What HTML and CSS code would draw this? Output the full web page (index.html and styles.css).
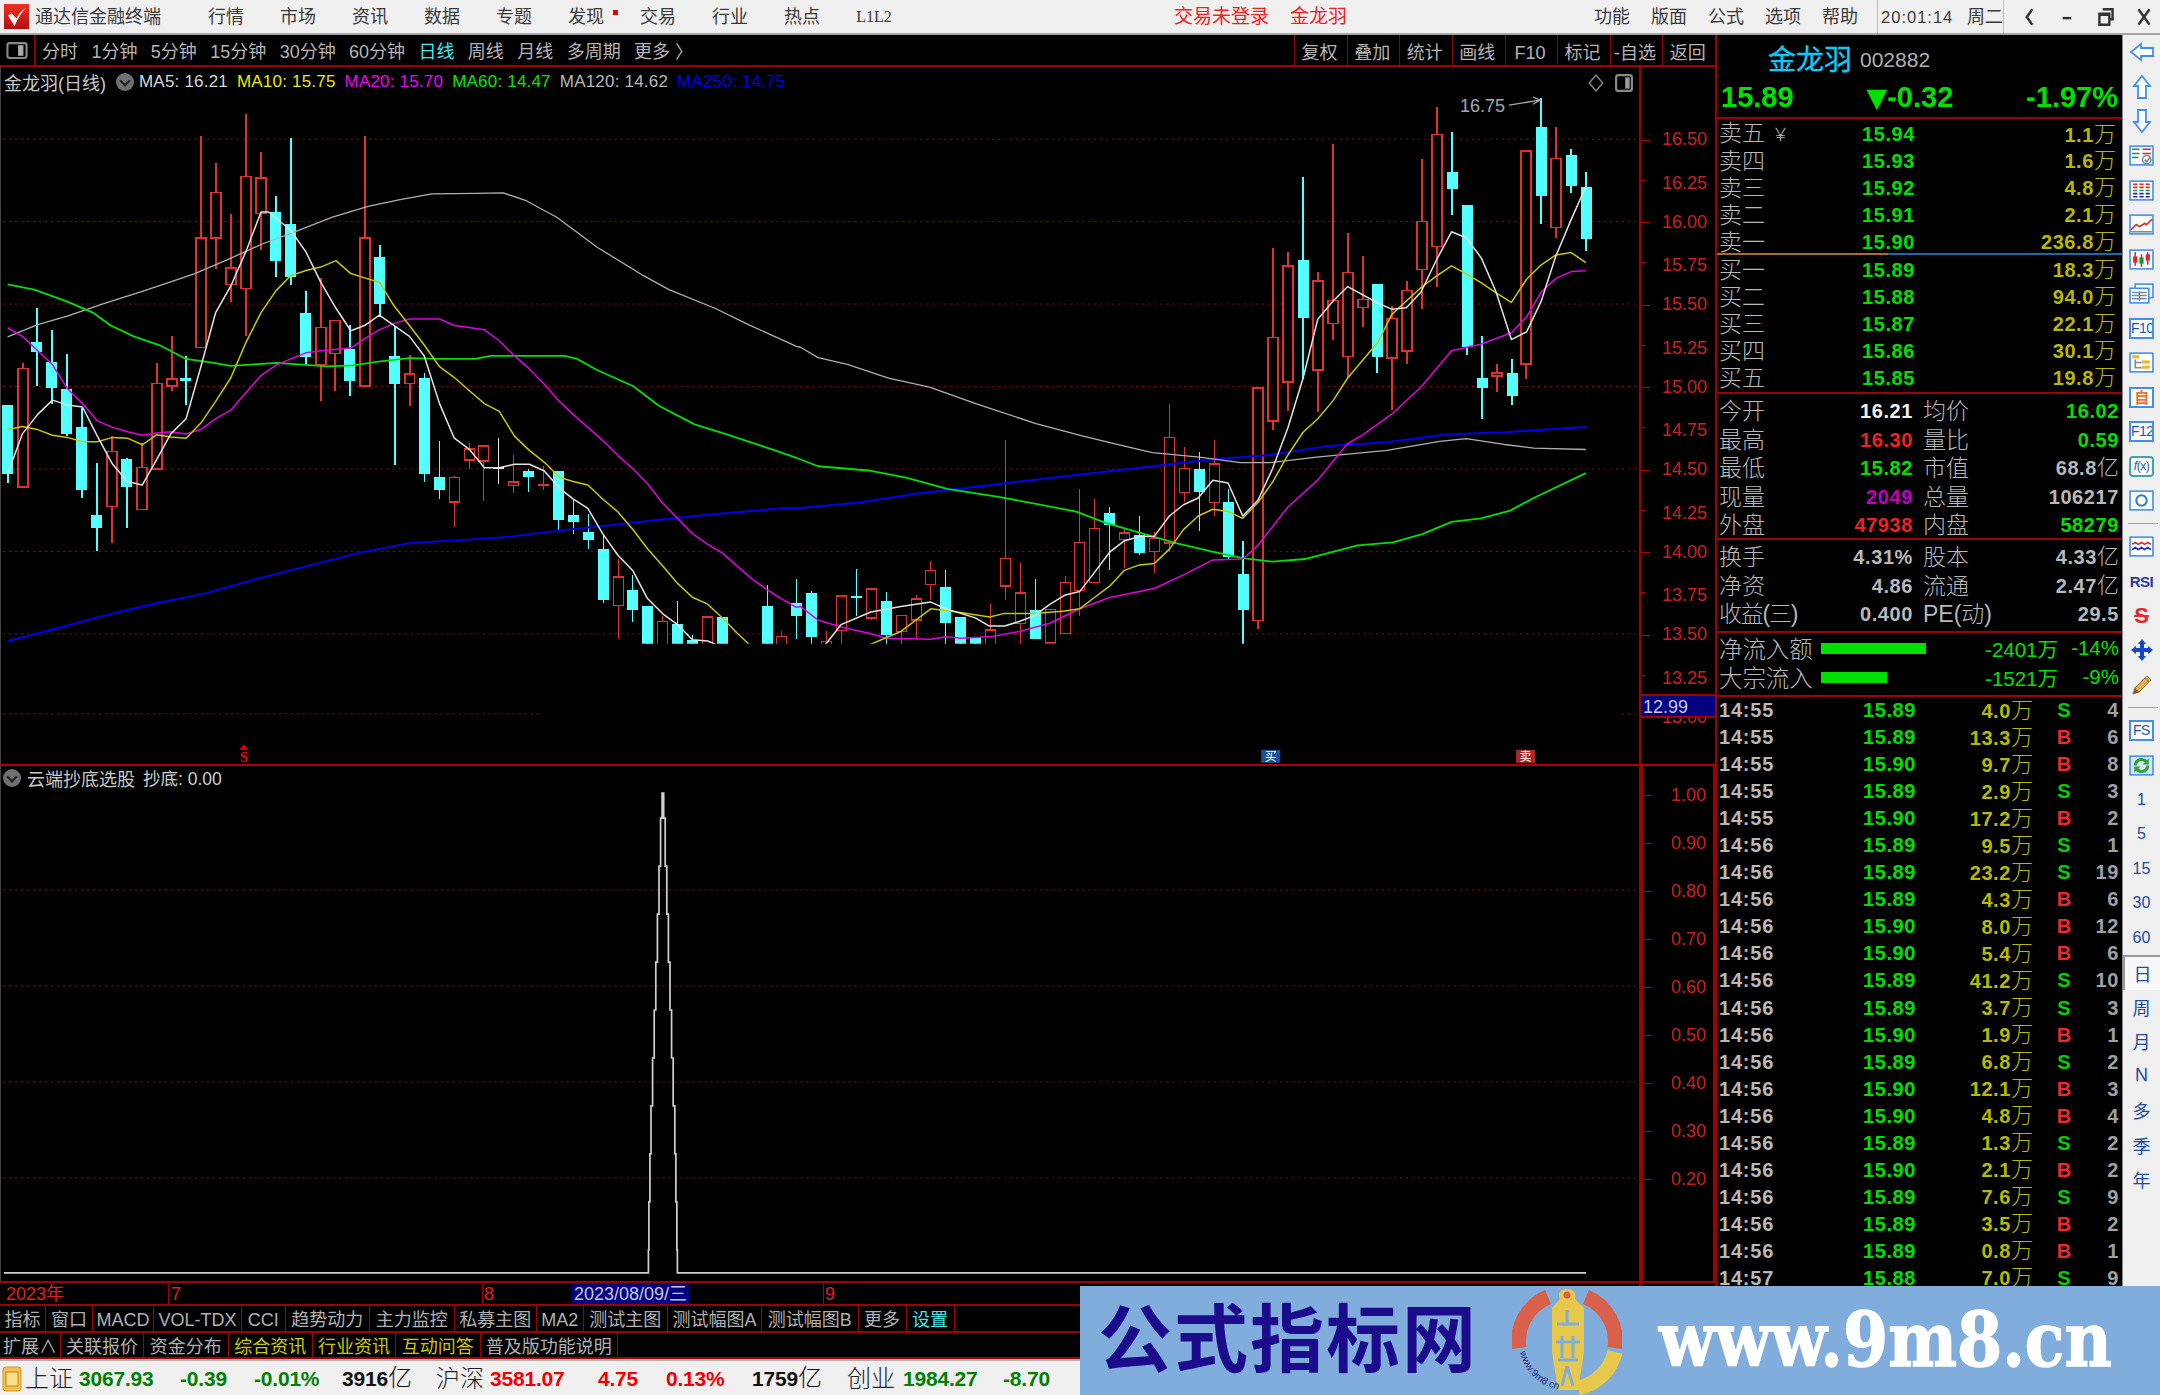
FILE: index.html
```html
<!DOCTYPE html>
<html lang="zh-CN">
<head>
<meta charset="utf-8">
<title>通达信金融终端</title>
<link rel="stylesheet" href="styles.css">
</head>
<body>
<div class="app">
  <header class="topbar">
    <svg class="app-logo" viewBox="0 0 26 26"><defs><linearGradient id="lg" x1="0" y1="0" x2="0" y2="1"><stop offset="0" stop-color="#f03020"/><stop offset="1" stop-color="#b01010"/></linearGradient></defs><rect width="26" height="26" fill="url(#lg)"/><path d="M23 4 C18 7 15 11 13 15 L8 10 L4 12 L11 23 C14 16 18 9 23 4 Z" fill="#f4f0f0"/></svg>
    <span class="app-title">通达信金融终端</span>
    <nav class="menu">
      <span>行情</span><span>市场</span><span>资讯</span><span>数据</span><span>专题</span><span class="has-dot">发现</span><span>交易</span><span>行业</span><span>热点</span><span class="menu-serif">L1L2</span>
    </nav>
    <span class="login">交易未登录</span>
    <span class="login login-name">金龙羽</span>
    <nav class="menu menu-right"><span>功能</span><span>版面</span><span>公式</span><span>选项</span><span>帮助</span></nav>
    <div class="clock"><span class="clock-time">20:01:14</span><span>周二</span></div>
    <div class="winbtns">
      <svg viewBox="0 0 16 20"><path d="M11 3 L6 10 L11 17" class="win-stroke"/></svg>
      <svg viewBox="0 0 16 20"><path d="M4 11 H12" class="win-stroke"/></svg>
      <svg viewBox="0 0 16 20"><path d="M5 3 H14 V12 H11 M2 7 H11 V17 H2 Z M2 8 H11" class="win-stroke"/></svg>
      <svg viewBox="0 0 16 20"><path d="M3 3 L13 17 M13 3 L3 17" class="win-stroke"/></svg>
    </div>
  </header>

  <div class="main">
    <section class="chart-col">
      <div class="toolbar">
        <div class="tool-icon"><svg viewBox="0 0 20 16"><rect x="1" y="1" width="18" height="14" rx="2" class="pane-ico"/><rect x="11" y="3" width="5" height="10" class="pane-fill"/></svg></div>
        <div class="periods">
          <span>分时</span><span>1分钟</span><span>5分钟</span><span>15分钟</span><span>30分钟</span><span>60分钟</span><span class="on">日线</span><span>周线</span><span>月线</span><span>多周期</span><span>更多 〉</span>
        </div>
        <div class="tool-btns">
          <span>复权</span><span>叠加</span><span>统计</span><span>画线</span><span>F10</span><span>标记</span><span>-自选</span><span>返回</span>
        </div>
      </div>

      <div class="upper">
        <svg class="plot" id="plot-upper" viewBox="0 67 1639 697">
          <defs><clipPath id="clip-up"><rect x="0" y="67" width="1639" height="577"/></clipPath></defs>
          <path class="grid" d="M2 139H1639M2 221.5H1639M2 304H1639M2 386.5H1639M2 469H1639M2 551.5H1639M2 634H1639M2 714H538M1622 714H1639"/>
          <g clip-path="url(#clip-up)" id="up-series"></g>
          <text x="1460" y="112" class="peak">16.75</text>
          <path class="peak-arrow" d="M1509 105 L1540 100 M1533 97 L1540 100 L1533 104"/>
          <path class="mk-s" d="M243 745 L247.500 750 H238.500 Z"/>
          <text x="243" y="762" class="mk-s-text">S</text>
          <rect x="1261" y="750" width="19" height="13" class="mk-buy"/><text x="1270.500" y="761" class="mk-label">买</text>
          <rect x="1516" y="750" width="19" height="13" class="mk-sell"/><text x="1525.500" y="761" class="mk-label">卖</text>
        </svg>
        <div class="axis axis-up">
          <span>16.50</span><span class="minor">16.25</span><span>16.00</span><span class="minor">15.75</span><span>15.50</span><span class="minor">15.25</span><span>15.00</span><span class="minor">14.75</span><span>14.50</span><span class="minor">14.25</span><span>14.00</span><span class="minor">13.75</span><span>13.50</span><span class="minor">13.25</span><span>13.00</span>
          <div class="axis-cursor">12.99</div>
        </div>
        <div class="legend">
          <span class="legend-name">金龙羽(日线)</span>
          <i class="chev"></i>
          <span class="c-ma5">MA5: 16.21</span><span class="c-ma10">MA10: 15.75</span><span class="c-ma20">MA20: 15.70</span><span class="c-ma60">MA60: 14.47</span><span class="c-ma120">MA120: 14.62</span><span class="c-ma250">MA250: 14.75</span>
        </div>
        <div class="plot-tools">
          <svg viewBox="0 0 14 16" class="pt-diamond"><path d="M7 1 L13 8 L7 15 L1 8 Z"/></svg>
          <svg viewBox="0 0 16 16" class="pt-pane"><rect x="1" y="1" width="14" height="14" rx="2"/><path d="M9 3 H13 V13 H9 Z"/></svg>
        </div>
      </div>

      <div class="lower">
        <svg class="plot" id="plot-lower" viewBox="0 766 1639 515">
          <path class="grid" d="M2 890H1639M2 986H1639M2 1082H1639M2 1178H1639"/>
          <path id="spike" class="spike" d=""/>
        </svg>
        <div class="axis axis-low">
          <span>1.00</span><span>0.90</span><span>0.80</span><span>0.70</span><span>0.60</span><span>0.50</span><span>0.40</span><span>0.30</span><span>0.20</span>
        </div>
        <div class="legend legend-low">
          <i class="chev"></i>
          <span class="legend-name">云端抄底选股</span><span class="legend-val">抄底: 0.00</span>
        </div>
      </div>

      <div class="timeaxis">
        <div class="time-track">
          <span class="t-label t-y">2023年</span>
          <i class="t-tick t-l7"></i><span class="t-label t-7">7</span>
          <i class="t-tick t-l8"></i><span class="t-label t-8">8</span>
          <span class="t-cursor">2023/08/09/三</span>
          <i class="t-tick t-l9"></i><span class="t-label t-9">9</span>
        </div>
      </div>
      <div class="tabs tabs-a">
        <span>指标</span><span>窗口</span><span>MACD</span><span>VOL-TDX</span><span>CCI</span><span>趋势动力</span><span>主力监控</span><span>私募主图</span><span>MA2</span><span>测试主图</span><span>测试幅图A</span><span>测试幅图B</span><span>更多</span><span class="cyan">设置</span>
      </div>
      <div class="tabs tabs-b">
        <span>扩展∧</span><span>关联报价</span><span>资金分布</span><span class="yel">综合资讯</span><span class="yel">行业资讯</span><span class="yel">互动问答</span><span>普及版功能说明</span>
      </div>
    </section>

    <aside class="quote">
      <div class="q-title"><span class="q-name">金龙羽</span><span class="q-code">002882</span></div>
      <div class="q-price"><span>15.89</span><span><i class="tri">▼</i>-0.32</span><span>-1.97%</span></div>

      <div class="book">
        <div class="b-row"><span class="lbl">卖五 <em>￥</em></span><b>15.94</b><span class="vol"><b>1.1</b>万</span></div>
        <div class="b-row"><span class="lbl">卖四</span><b>15.93</b><span class="vol"><b>1.6</b>万</span></div>
        <div class="b-row"><span class="lbl">卖三</span><b>15.92</b><span class="vol"><b>4.8</b>万</span></div>
        <div class="b-row"><span class="lbl">卖二</span><b>15.91</b><span class="vol"><b>2.1</b>万</span></div>
        <div class="b-row"><span class="lbl">卖一</span><b>15.90</b><span class="vol"><b>236.8</b>万</span></div>
      </div>
      <div class="book-split"></div>
      <div class="book book-buy">
        <div class="b-row"><span class="lbl">买一</span><b>15.89</b><span class="vol"><b>18.3</b>万</span></div>
        <div class="b-row"><span class="lbl">买二</span><b>15.88</b><span class="vol"><b>94.0</b>万</span></div>
        <div class="b-row"><span class="lbl">买三</span><b>15.87</b><span class="vol"><b>22.1</b>万</span></div>
        <div class="b-row"><span class="lbl">买四</span><b>15.86</b><span class="vol"><b>30.1</b>万</span></div>
        <div class="b-row"><span class="lbl">买五</span><b>15.85</b><span class="vol"><b>19.8</b>万</span></div>
      </div>

      <div class="stats">
        <div class="s-row"><span class="lbl">今开</span><b class="white">16.21</b><span class="lbl">均价</span><b class="green">16.02</b></div>
        <div class="s-row"><span class="lbl">最高</span><b class="red">16.30</b><span class="lbl">量比</span><b class="green">0.59</b></div>
        <div class="s-row"><span class="lbl">最低</span><b class="green">15.82</b><span class="lbl">市值</span><b class="gray">68.8<i>亿</i></b></div>
        <div class="s-row"><span class="lbl">现量</span><b class="mag">2049</b><span class="lbl">总量</span><b class="gray">106217</b></div>
        <div class="s-row"><span class="lbl">外盘</span><b class="red">47938</b><span class="lbl">内盘</span><b class="green">58279</b></div>
      </div>
      <div class="stats stats-b">
        <div class="s-row"><span class="lbl">换手</span><b class="gray">4.31%</b><span class="lbl">股本</span><b class="gray">4.33<i>亿</i></b></div>
        <div class="s-row"><span class="lbl">净资</span><b class="gray">4.86</b><span class="lbl">流通</span><b class="gray">2.47<i>亿</i></b></div>
        <div class="s-row"><span class="lbl lbl-tight">收益(三)</span><b class="gray">0.400</b><span class="lbl">PE(动)</span><b class="gray">29.5</b></div>
      </div>

      <div class="flows">
        <div class="f-row"><span class="lbl">净流入额</span><div class="f-track"><div class="f-bar" style="width:105px"></div></div><span class="f-val">-2401万</span><span class="f-pct">-14%</span></div>
        <div class="f-row"><span class="lbl">大宗流入</span><div class="f-track"><div class="f-bar" style="width:66px"></div></div><span class="f-val">-1521万</span><span class="f-pct">-9%</span></div>
      </div>

      <div class="trades">
        <div class="t-row"><b>14:55</b><b>15.89</b><span class="vol"><b>4.0</b>万</span><b class="s">S</b><b class="n">4</b></div>
        <div class="t-row"><b>14:55</b><b>15.89</b><span class="vol"><b>13.3</b>万</span><b class="b">B</b><b class="n">6</b></div>
        <div class="t-row"><b>14:55</b><b>15.90</b><span class="vol"><b>9.7</b>万</span><b class="b">B</b><b class="n">8</b></div>
        <div class="t-row"><b>14:55</b><b>15.89</b><span class="vol"><b>2.9</b>万</span><b class="s">S</b><b class="n">3</b></div>
        <div class="t-row"><b>14:55</b><b>15.90</b><span class="vol"><b>17.2</b>万</span><b class="b">B</b><b class="n">2</b></div>
        <div class="t-row"><b>14:56</b><b>15.89</b><span class="vol"><b>9.5</b>万</span><b class="s">S</b><b class="n">1</b></div>
        <div class="t-row"><b>14:56</b><b>15.89</b><span class="vol"><b>23.2</b>万</span><b class="s">S</b><b class="n">19</b></div>
        <div class="t-row"><b>14:56</b><b>15.89</b><span class="vol"><b>4.3</b>万</span><b class="b">B</b><b class="n">6</b></div>
        <div class="t-row"><b>14:56</b><b>15.90</b><span class="vol"><b>8.0</b>万</span><b class="b">B</b><b class="n">12</b></div>
        <div class="t-row"><b>14:56</b><b>15.90</b><span class="vol"><b>5.4</b>万</span><b class="b">B</b><b class="n">6</b></div>
        <div class="t-row"><b>14:56</b><b>15.89</b><span class="vol"><b>41.2</b>万</span><b class="s">S</b><b class="n">10</b></div>
        <div class="t-row"><b>14:56</b><b>15.89</b><span class="vol"><b>3.7</b>万</span><b class="s">S</b><b class="n">3</b></div>
        <div class="t-row"><b>14:56</b><b>15.90</b><span class="vol"><b>1.9</b>万</span><b class="b">B</b><b class="n">1</b></div>
        <div class="t-row"><b>14:56</b><b>15.89</b><span class="vol"><b>6.8</b>万</span><b class="s">S</b><b class="n">2</b></div>
        <div class="t-row"><b>14:56</b><b>15.90</b><span class="vol"><b>12.1</b>万</span><b class="b">B</b><b class="n">3</b></div>
        <div class="t-row"><b>14:56</b><b>15.90</b><span class="vol"><b>4.8</b>万</span><b class="b">B</b><b class="n">4</b></div>
        <div class="t-row"><b>14:56</b><b>15.89</b><span class="vol"><b>1.3</b>万</span><b class="s">S</b><b class="n">2</b></div>
        <div class="t-row"><b>14:56</b><b>15.90</b><span class="vol"><b>2.1</b>万</span><b class="b">B</b><b class="n">2</b></div>
        <div class="t-row"><b>14:56</b><b>15.89</b><span class="vol"><b>7.6</b>万</span><b class="s">S</b><b class="n">9</b></div>
        <div class="t-row"><b>14:56</b><b>15.89</b><span class="vol"><b>3.5</b>万</span><b class="b">B</b><b class="n">2</b></div>
        <div class="t-row"><b>14:56</b><b>15.89</b><span class="vol"><b>0.8</b>万</span><b class="b">B</b><b class="n">1</b></div>
      </div>
      <div class="t-row t-row-cut"><b>14:57</b><b>15.88</b><span class="vol"><b>7.0</b>万</span><b class="s">S</b><b class="n">9</b></div>
    </aside>

    <aside class="side">
      <div class="side-item"><svg viewBox="0 0 26 22" class="arrow"><path d="M2 11 L12 3 V7 H24 V15 H12 V19 Z"/></svg></div>
      <div class="side-item"><svg viewBox="0 0 22 26" class="arrow"><path d="M11 2 L19 12 H15 V24 H7 V12 H3 Z"/></svg></div>
      <div class="side-item"><svg viewBox="0 0 22 26" class="arrow"><path d="M11 24 L19 14 H15 V2 H7 V14 H3 Z"/></svg></div>
      <div class="side-item"><svg viewBox="0 0 24 20" class="ico"><rect x="1" y="1" width="22" height="18" class="box"/><path d="M3 4H10M3 8H10M3 12H9" class="s-green"/><path d="M13 4H21M13 8H21" class="s-red"/><circle cx="17" cy="14" r="4" class="s-gray"/><path d="M15 14 L17 16 L20 12" class="s-gray"/></svg></div>
      <div class="side-item"><svg viewBox="0 0 24 20" class="ico"><rect x="1" y="1" width="22" height="18" class="box"/><path d="M4 4H8M10 4H14M16 4H20M4 7H8M16 7H20M10 7H14" class="s-red"/><path d="M4 10H8M10 10H14M16 10H20" class="s-green"/><path d="M4 13H8M10 13H14M16 13H20M4 16H8M10 16H14M16 16H20" class="s-blue"/></svg></div>
      <div class="side-item"><svg viewBox="0 0 24 20" class="ico"><rect x="1" y="1" width="22" height="18" class="box"/><path d="M2 15 L7 10 L10 12 L15 9 L17 10 L22 5" class="s-red"/><path d="M2 17H22" class="s-gray"/></svg></div>
      <div class="side-item"><svg viewBox="0 0 24 20" class="ico"><rect x="1" y="1" width="22" height="18" class="box"/><path d="M6 3V16M12 5V17M18 3V15" class="s-red"/><rect x="4" y="7" width="4" height="6" class="f-red"/><rect x="10" y="8" width="4" height="6" class="f-green"/><rect x="16" y="5" width="4" height="6" class="f-red"/></svg></div>
      <div class="side-item"><svg viewBox="0 0 24 20" class="ico"><rect x="6" y="1" width="17" height="13" class="box"/><rect x="1" y="5" width="18" height="14" class="box"/><path d="M3 9H17M3 12H17M3 15H17M10 8V17" class="s-gray"/></svg></div>
      <div class="side-item"><span class="boxed">F10</span></div>
      <div class="side-item"><svg viewBox="0 0 24 20" class="ico"><rect x="1" y="1" width="22" height="18" class="box"/><path d="M6 7V15H12M6 10H12" class="s-gray"/><rect x="3" y="3" width="7" height="3" class="f-yellow"/><rect x="12" y="8" width="8" height="3" class="f-yellow"/><rect x="12" y="13" width="8" height="3" class="f-yellow"/></svg></div>
      <div class="side-item"><span class="boxed boxed-orange">自</span></div>
      <div class="side-item"><span class="boxed">F12</span></div>
      <div class="side-item"><span class="boxed boxed-teal"><em>f</em>(x)</span></div>
      <div class="side-item"><svg viewBox="0 0 24 20" class="ico"><rect x="1" y="1" width="22" height="18" class="box"/><circle cx="12" cy="10" r="5" class="s-blue2"/></svg></div>
      <div class="side-sep"></div>
      <div class="side-item"><svg viewBox="0 0 24 20" class="ico"><rect x="1" y="1" width="22" height="18" class="box"/><path d="M3 8 L6 6 L9 8 L12 6 L15 8 L18 6 L21 8" class="s-red"/><path d="M3 13 L6 11 L9 13 L12 11 L15 13 L18 11 L21 13" class="s-blue"/></svg></div>
      <div class="side-item"><span class="rsi">RSI</span></div>
      <div class="side-item"><span class="dollar">S</span></div>
      <div class="side-item"><svg viewBox="0 0 24 24" class="ico ico-sq"><path d="M12 1 L16 6 H14 V10 H18 V8 L23 12 L18 16 V14 H14 V18 H16 L12 23 L8 18 H10 V14 H6 V16 L1 12 L6 8 V10 H10 V6 H8 Z" class="f-move"/></svg></div>
      <div class="side-item"><svg viewBox="0 0 24 24" class="ico ico-sq"><path d="M3 21 L5 15 L17 3 L21 7 L9 19 Z" class="f-pencil"/><path d="M3 21 L5 15 L9 19 Z" class="f-tip"/><path d="M15 5 L19 9" class="s-gray"/></svg></div>
      <div class="side-sep"></div>
      <div class="side-item"><span class="boxed">FS</span></div>
      <div class="side-item"><svg viewBox="0 0 24 20" class="ico"><rect x="1" y="1" width="22" height="18" class="box box-soft"/><path d="M6 10 A6 6 0 0 1 17 7 M18 10 A6 6 0 0 1 7 13" class="s-refresh"/><path d="M19 3 V9 H13 Z M5 17 V11 H11 Z" class="f-green2"/></svg></div>
      <div class="side-item side-txt">1</div>
      <div class="side-item side-txt">5</div>
      <div class="side-item side-txt">15</div>
      <div class="side-item side-txt">30</div>
      <div class="side-item side-txt">60</div>
      <div class="side-item side-txt side-on">日</div>
      <div class="side-item side-txt">周</div>
      <div class="side-item side-txt">月</div>
      <div class="side-item side-txt">N</div>
      <div class="side-item side-txt">多</div>
      <div class="side-item side-txt">季</div>
      <div class="side-item side-txt">年</div>
    </aside>
  </div>

  <footer class="status">
    <svg class="status-ico" viewBox="0 0 20 26"><rect x="1" y="1" width="18" height="24" rx="3" class="si-outer"/><rect x="4" y="6" width="12" height="14" class="si-inner"/></svg>
    <span class="st-name">上证</span><b class="st-g">3067.93</b><b class="st-g">-0.39</b><b class="st-g">-0.01%</b><b class="st-k">3916<i>亿</i></b>
    <span class="st-name">沪深</span><b class="st-r">3581.07</b><b class="st-r">4.75</b><b class="st-r">0.13%</b><b class="st-k">1759<i>亿</i></b>
    <span class="st-name">创业</span><b class="st-g">1984.27</b><b class="st-g">-8.70</b>
  </footer>

  <div class="watermark">
    <span class="wm-cn">公式指标网</span>
    <svg class="wm-logo" viewBox="0 0 110 110">
      <defs><path id="wm-arc" d="M8 66 A48 48 0 0 0 52 104"/></defs>
      <path d="M7 62 A48 48 0 0 1 36 11" class="wm-red"/><path d="M74 11 A48 48 0 0 1 103 62" class="wm-red"/>
      <path d="M103 66 A48 48 0 0 1 66 102" class="wm-yel"/>
      <path d="M55 3 C62 3 65 8 63 13 L72 22 L72 66 L66 104 H46 L40 66 L40 22 L48 13 C45 8 48 3 55 3 Z" class="wm-fig"/>
      <circle cx="55" cy="9" r="3.500" class="wm-eye"/>
      <path d="M45 38 H67 M55 24 V38 M44 56 H68 M50 50 V72 M61 50 V72 M46 74 H66 M55 80 L50 100 M55 80 L61 100" class="wm-ink"/>
      <text class="wm-small"><textPath href="#wm-arc">www.9m8.cn</textPath></text>
    </svg>
    <span class="wm-url">www.9m8.cn</span>
  </div>
</div>
<script src="chart.js"></script>
</body>
</html>
```
FILE: styles.css
```css
* { box-sizing: border-box; margin: 0; padding: 0; }
html, body { background: #000; }
body {
  width: 2160px; height: 1395px; overflow: hidden;
  font-family: "Liberation Sans", "Noto Sans CJK SC", sans-serif;
}
.app { width: 2160px; height: 1395px; position: relative; display: flex; flex-direction: column; overflow: hidden; }

/* top bar */
.topbar {
  height: 35px; flex: none; display: flex; align-items: center;
  background: #f0f0f0; border-bottom: 2px solid #a6a6a6; padding-top: 1px;
  color: #3a3a3a; font-size: 18px; line-height: 32px;
}
.app-logo { width: 25px; height: 25px; margin-left: 4px; margin-top: -2px; flex: none; }
.app-title { margin-left: 6px; width: 173px; }
.menu { display: flex; gap: 36px; }
.menu span { width: 36px; text-align: center; position: relative; white-space: nowrap; }
.has-dot::after { content: ""; position: absolute; left: 45px; top: 9px; width: 5px; height: 5px; background: #f00000; }
.menu-serif { font-family: "Liberation Serif", serif; font-size: 16px; }
.login { color: #f02020; font-size: 19px; margin-left: 282px; white-space: nowrap; }
.login-name { margin-left: 21px; }
.menu-right { gap: 21px; margin-left: 247px; }
.clock { margin-left: 19px; width: 127px; height: 32px; border-left: 1px solid #bdbdbd; border-right: 1px solid #bdbdbd; display: flex; align-items: center; white-space: nowrap; }
.clock-time { font-size: 16.500px; letter-spacing: 1px; width: 86px; margin-left: 3px; }
.winbtns { display: flex; flex: 1; align-items: center; justify-content: space-between; padding: 0 7px 0 16px; }
.winbtns svg { width: 18px; height: 22px; }
.win-stroke { fill: none; stroke: #333; stroke-width: 2.200; }

/* layout */
.main { flex: none; height: 1324px; display: flex; background: #000; }
.chart-col { width: 1715px; flex: none; display: flex; flex-direction: column; }

/* toolbar */
.toolbar { height: 32px; flex: none; display: flex; align-items: center; border-bottom: 2px solid #a00000; color: #b4b4b4; font-size: 18px; line-height: 30px; }
.tool-icon { width: 36px; height: 30px; border-right: 2px solid #8c0000; display: flex; align-items: center; justify-content: center; }
.tool-icon svg { width: 22px; height: 17px; }
.pane-ico { fill: none; stroke: #888; stroke-width: 2; }
.pane-fill { fill: #aaa; }
.periods { display: flex; gap: 13.400px; margin-left: 6px; padding-top: 3px; white-space: nowrap; }
.periods .on { color: #40e8f0; }
.tool-btns { margin-left: auto; display: flex; }
.tool-btns span { width: 52.600px; height: 30px; padding: 3px 3px 0 0; text-align: center; border-left: 1px solid #8c0000; white-space: nowrap; }

/* charts */
.upper, .lower { display: flex; position: relative; flex: none; }
.upper { height: 699px; border-bottom: 2px solid #b00000; }
.lower { height: 515px; }
.plot { width: 1639px; flex: none; display: block; background: #000; border-left: 1px solid #444; }
.upper .plot { height: 697px; }
.lower .plot { height: 515px; }
.grid { stroke: #960808; stroke-width: 1; stroke-dasharray: 2 4; fill: none; }
.ln { fill: none; stroke-width: 1.500; stroke-linejoin: round; }
.ma5 { stroke: #e2e2e2; } .ma10 { stroke: #c8c800; } .ma20 { stroke: #e000e0; }
.ma60 { stroke: #00e000; stroke-width: 1.800; } .ma120 { stroke: #b0b0b0; stroke-width: 1.300; } .ma250 { stroke: #0000f0; stroke-width: 2; }
.wick { stroke-width: 1.500; shape-rendering: crispEdges; }
.wick-r { stroke: #e03030; } .wick-c { stroke: #54ffff; } .wick-w { stroke: #e8e8e8; }
.body-r { fill: #000; stroke: #e03030; stroke-width: 1.500; shape-rendering: crispEdges; }
.body-c { fill: #54ffff; shape-rendering: crispEdges; }
.body-rf { fill: #e03030; shape-rendering: crispEdges; }
.body-w { fill: #e8e8e8; shape-rendering: crispEdges; }
.peak { fill: #a8a8a8; font-size: 18px; }
.peak-arrow { fill: none; stroke: #a8a8a8; stroke-width: 1.300; }
.mk-s { fill: #f00000; }
.mk-s-text { fill: #f00000; font: bold 15px "Liberation Serif", serif; text-anchor: middle; }
.mk-buy { fill: #1c4f94; } .mk-sell { fill: #a82828; }
.mk-label { fill: #fff; font-size: 12px; text-anchor: middle; }
.spike { fill: none; stroke: #d0d0d0; stroke-width: 1.700; }

.axis { width: 76px; flex: none; position: relative; color: #cc2020; font-size: 18px; }
.axis span { display: block; text-align: right; padding-right: 8px; position: relative; }
.axis span::before { content: ""; position: absolute; left: 0; top: 50%; width: 9px; height: 1px; background: #b00000; }
.axis-up { border-left: 2px solid #a00000; padding-top: 52px; height: 697px; overflow: hidden; }
.axis-up span { height: 41.250px; line-height: 41.250px; }
.axis-up .minor { top: 2.500px; }
.axis-up .minor::before { width: 4px; top: 17px; }
.axis-cursor { position: absolute; left: 0; right: 0; top: 627px; height: 24px; line-height: 22px; background: #000080; border-top: 2px solid #a00000; border-bottom: 2px solid #a00000; color: #c8c8e8; font-size: 18px; padding-left: 2px; }
.axis-low { border-left: 4px solid #a00000; border-right: 2px solid #a00000; border-top: 0; padding-top: 5px; }
.axis-low span { height: 48px; line-height: 48px; padding-right: 7px; }
.legend { position: absolute; left: 4px; top: 3px; height: 24px; display: flex; align-items: center; gap: 9px; font-size: 17px; letter-spacing: .2px; white-space: nowrap; }
.legend-name { color: #c8c8c8; font-size: 18px; letter-spacing: 0; }
.legend .chev { margin: 0 -4px 0 1px; }
.chev { width: 18px; height: 18px; border-radius: 50%; background: #707070; position: relative; display: block; flex: none; }
.chev::after { content: ""; position: absolute; left: 5px; top: 4px; width: 6px; height: 6px; border-right: 2px solid #222; border-bottom: 2px solid #222; transform: rotate(45deg); }
.c-ma5 { color: #d8d8d8; } .c-ma10 { color: #e8e800; } .c-ma20 { color: #f000f0; } .c-ma60 { color: #00e800; } .c-ma120 { color: #b8b8b8; } .c-ma250 { color: #0000e8; }
.legend-low { left: 3px; top: 0; height: 23px; gap: 6px; }
.legend-low .chev { margin: 0; }
.legend-val { color: #d0d0d0; font-size: 17.500px; margin-left: 2px; letter-spacing: 0; }
.plot-tools { position: absolute; left: 1588px; top: 7px; display: flex; align-items: center; gap: 11px; }
.pt-diamond { width: 16px; height: 18px; }
.pt-diamond path { fill: none; stroke: #888; stroke-width: 1.300; }
.pt-pane { width: 18px; height: 18px; }
.pt-pane rect { fill: none; stroke: #888; stroke-width: 2; }
.pt-pane path { fill: #999; }

/* time axis and tabs */
.timeaxis { height: 25px; flex: none; display: flex; border-top: 2px solid #a00000; border-bottom: 2px solid #a00000; }
.time-track { width: 1641px; position: relative; border-right: 2px solid #a00000; color: #e02020; font-size: 18px; line-height: 22px; }
.t-label { position: absolute; top: 0; }
.t-y { left: 6px; } .t-7 { left: 171px; } .t-8 { left: 484px; } .t-9 { left: 825px; }
.t-tick { position: absolute; top: 0; bottom: 0; width: 1px; background: #a00000; display: block; }
.t-l7 { left: 168px; } .t-l8 { left: 482px; } .t-l9 { left: 823px; }
.t-cursor { position: absolute; left: 572px; top: 0; width: 117px; height: 21px; background: #000080; color: #c8c8d8; font-size: 18px; text-align: center; white-space: nowrap; }
.tabs { display: grid; height: 26.500px; flex: none; border-bottom: 2px solid #a00000; color: #b0b0b0; font-size: 18px; line-height: 24px; }
.tabs span { text-align: center; border-right: 1px solid #a00000; white-space: nowrap; padding-top: 2px; }
.tabs-a { grid-template-columns: 46px 47px 61px 88px 43.500px 84.500px 84.500px 82.500px 46.500px 84.500px 94px 96.500px 48px 48px; }
.tabs-b { grid-template-columns: 61px 83px 84.500px 84.500px 83px 84.500px 137.500px; }
.tabs .yel { color: #c8c800; }
.tabs .cyan { color: #40e8e8; }

/* quote panel */
.quote { width: 407px; flex: none; border-left: 2px solid #a00000; color: #b8b8b8; overflow: hidden; }
.quote b { font-weight: 700; font-size: 20px; letter-spacing: .6px; }
.q-title { height: 43px; padding: 2px 0 0 51px; display: flex; align-items: center; gap: 8px; }
.q-name { color: #10c8f0; font-size: 28px; -webkit-text-stroke: .4px #10c8f0; }
.q-code { color: #b0b0b0; font-size: 21px; margin-top: 4px; }
.q-price { height: 41px; border-bottom: 2px solid #a00000; display: flex; justify-content: space-between; align-items: center; padding: 0 4px 0 4px; color: #00e000; font-size: 29px; font-weight: 700; }
.tri { font-family: "DejaVu Sans", sans-serif; font-style: normal; font-weight: 400; font-size: 27px; line-height: 1; }
.lbl { color: #b8b8b8; font-size: 23px; font-weight: 300; white-space: nowrap; }
.lbl em { font-style: normal; font-size: 18px; }
.lbl-tight { letter-spacing: -1.200px; }
.book { height: 135px; padding-top: 1px; }
.book-buy { border-bottom: 2px solid #a00000; height: 139px; padding-top: 1px; }
.b-row { height: 27px; display: grid; grid-template-columns: 143px 60px 1fr; align-items: center; padding: 0 6px 0 2px; line-height: 27px; }
.b-row > b { color: #00e000; }
.vol { text-align: right; color: #b8b800; font-size: 22px; font-weight: 300; white-space: nowrap; }
.book-split { height: 2px; margin-top: -1px; background: linear-gradient(90deg, #a87018 0 171px, #1c68a8 171px); }
.stats { height: 146px; border-bottom: 2px solid #a00000; padding-top: 3px; }
.stats-b { height: 92.500px; }
.s-row { height: 28.600px; display: grid; grid-template-columns: 72px 122px 62px 1fr; column-gap: 0; align-items: center; padding: 0 3px 0 2px; line-height: 28.600px; }
.s-row .lbl:nth-child(3) { margin-left: 10px; }
.s-row b { text-align: right; white-space: nowrap; }
.s-row b i { font-style: normal; font-size: 22px; font-weight: 300; letter-spacing: 0; }
.white { color: #f0f0f0; } .green { color: #00e000; } .red { color: #f02020; } .gray { color: #b8b8b8; } .mag { color: #c000c0; }
.flows { height: 64px; border-bottom: 2px solid #a00000; padding-top: 1px; }
.f-row { height: 29px; display: flex; align-items: center; padding: 0 3px 0 2px; color: #00e000; font-size: 20.500px; white-space: nowrap; }
.f-row .lbl { width: 102px; font-size: 23.500px; letter-spacing: -.1px; }
.f-track { width: 150px; }
.f-bar { height: 11px; background: #00e000; }
.f-val { width: 87px; text-align: right; }
.f-pct { flex: 1; text-align: right; }
.t-row { height: 27.050px; display: grid; grid-template-columns: 144px 60px 110px 62px 1fr; align-items: center; padding: 0 3px 0 2px; line-height: 27px; }
.t-row > b:first-child { color: #b8b8b8; letter-spacing: .8px; }
.t-row > b:nth-child(2) { color: #00e000; }
.t-row .s { color: #00d000; text-align: center; letter-spacing: 0; }
.t-row .b { color: #f02828; text-align: center; letter-spacing: 0; }
.t-row .n { color: #a0a0a0; text-align: right; }

/* sidebar */
.side { flex: 1; background: #f0f0f0; border-left: 1px solid #888; display: flex; flex-direction: column; }
.side-item { height: 34.500px; flex: none; display: flex; align-items: center; justify-content: center; }
.side-sep { height: 11.500px; flex: none; position: relative; }
.side-sep::after { content: ""; position: absolute; left: 5px; right: 2px; top: 5px; height: 1px; background: #a0a0a0; }
.arrow { width: 26px; height: 26px; }
.arrow path { fill: #fff; stroke: #3f8ff0; stroke-width: 1.800; }
.ico { width: 25px; height: 21px; }
.ico-sq { width: 24px; height: 24px; }
.box { fill: #fff; stroke: #3f8ff0; stroke-width: 1.500; }
.box-soft { fill: #d8e8f8; }
.s-green, .s-red, .s-blue, .s-gray, .s-blue2, .s-refresh { fill: none; stroke-width: 1.500; }
.s-green { stroke: #0a9a3a; } .s-red { stroke: #e82020; } .s-blue { stroke: #2020c0; } .s-gray { stroke: #7a8a9a; } .s-blue2 { stroke: #2f80d0; stroke-width: 2; } .s-refresh { stroke: #30a040; stroke-width: 3; }
.f-red { fill: #e82020; } .f-green { fill: #0a9a3a; } .f-yellow { fill: #f0b830; } .f-green2 { fill: #30a040; }
.f-move { fill: #1846c0; } .f-pencil { fill: #e8b040; stroke: #907040; } .f-tip { fill: #806040; }
.boxed { width: 25px; height: 21px; background: #fff; border: 2px solid #3f8ff0; color: #1f57a8; font-size: 14px; line-height: 17px; text-align: center; white-space: nowrap; overflow: hidden; letter-spacing: -.5px; }
.boxed-orange { color: #f07030; font-weight: 700; font-size: 15px; }
.boxed-teal { border-color: #3aa8a8; border-radius: 4px; font-size: 12px; }
.rsi { color: #2a3aa8; font-weight: 700; font-size: 15px; letter-spacing: -.5px; }
.dollar { color: #d83030; font-weight: 700; font-size: 22px; text-decoration: line-through; }
.side-txt { color: #234a9c; font-size: 16px; }
.side-on { background: #f8f8f8; border-left: 2px solid #999; border-top: 2px solid #999; font-size: 18px; }
.side-txt:nth-last-child(-n+6) { font-size: 18px; }

/* status */
.status { flex: none; height: 36px; background: #f0f0f0; border-top: 2px solid #b0b0b0; display: grid; grid-template-columns: 25px 54px 101px 74px 88px 94px 54px 108px 68px 86px 95px 56px 100px 72px; align-items: center; line-height: 34px; color: #222; white-space: nowrap; }
.status-ico { width: 20px; height: 26px; margin-left: 2px; }
.si-outer { fill: #f0c050; stroke: #d89820; } .si-inner { fill: #f8e090; stroke: #d08010; }
.st-name { font-size: 24px; font-weight: 300; }
.status b { font-size: 21px; font-weight: 700; letter-spacing: -.2px; }
.status b i { font-style: normal; font-size: 24px; font-weight: 300; }
.st-g { color: #008000; } .st-r { color: #f00000; } .st-k { color: #111; }

/* watermark band */
.watermark { position: absolute; left: 1080px; top: 1286px; right: 0; bottom: 0; background: #80addb; display: flex; align-items: center; padding-left: 18px; white-space: nowrap; }
.wm-cn { color: #1c0c8c; font-size: 74px; font-weight: 700; letter-spacing: 2px; width: 414px; line-height: 109px; }
.wm-logo { width: 110px; height: 110px; flex: none; }
.wm-url { display: inline-block; margin-left: 37px; color: #fff; font-family: "DejaVu Serif", serif; font-weight: 700; font-size: 65px; line-height: 109px; -webkit-text-stroke: 1.200px #fff; transform: scaleY(1.15); }
.wm-red { fill: none; stroke: #d9604a; stroke-width: 15; }
.wm-yel { fill: none; stroke: #e8c84a; stroke-width: 15; }
.wm-fig { fill: #e8c84a; }
.wm-eye { fill: #d9604a; }
.wm-ink { fill: none; stroke: #80add9; stroke-width: 3; }
.wm-small { fill: #1a2a70; font-size: 10px; }
```
FILE: chart.js
```js
// Price series, read off the chart: x/y are converted from two sampled ranges.
var NS = 'http://www.w3.org/2000/svg';
function A(p) { return [p[0] / 1.96, 100 + p[1] / 2.306]; }
function B(p) { return [800 + p[0] / 1.704, 70 + p[1] / 2.208]; }
function yA(v) { return 100 + v / 2.306; }
function yB(v) { return 70 + v / 2.208; }

var LOW = 1300;
var candlesA = [
  ['c',704,704,862,883],['r',607,619,892,892],['c',480,559,582,660],['c',530,604,664,700],['c',586,666,770,775],
  ['c',710,753,900,918],['c',838,957,987,1040],['r',775,811,937,1022],['c',825,829,893,987],['r',790,847,944,944],
  ['r',606,654,851,851],['r',545,643,660,670],['c',590,642,648,703],['r',82,318,571,571],['r',146,213,318,390],
  ['r',262,387,425,465],['r',32,176,435,545],['r',120,180,262,345],['c',220,258,370,408],['c',88,285,408,427],
  ['c',440,490,592,610],['r',410,525,610,695],['r',508,508,585,672],['c',518,575,648,682],['r',82,318,660,660],
  ['c',333,362,471,495],['c',520,590,655,842],['r',587,632,654,706],['c',630,642,862,880],['c',787,870,900,920],
  ['r',866,871,927,984],['r',790,805,830,850],['r',795,798,833,924],['w',780,847,851,886],['r',818,881,889,907],
  ['c',851,856,869,904],['rf',845,885,889,900],['c',856,856,969,995],['c',920,957,973,1000],['c',955,997,1015,1035],
  ['c',1000,1036,1154,1160],['r',1058,1100,1166,1243],['c',1095,1130,1177,1205],['c',1168,1168,LOW,LOW],['r',1190,1203,LOW,LOW],
  ['c',1155,1209,LOW,LOW],['c',1235,1245,LOW,LOW],['r',1192,1192,LOW,LOW],['c',1192,1192,LOW,LOW],null,
  null,['c',1118,1168,LOW,LOW],['r',1224,1238,LOW,LOW],['c',1105,1160,1190,1243]
];
var candlesB = [
  ['c',1150,1155,1252,LOW],['r',1238,1262,LOW,LOW],['r',1162,1162,1238,LOW],['c',1102,1161,1167,1205],['r',1146,1146,1210,1215],
  ['c',1152,1172,1248,LOW],['r',1205,1205,1240,LOW],['r',1160,1168,1215,1255],['r',1085,1105,1136,1170],['c',1105,1141,1222,LOW],
  ['c',1208,1208,LOW,LOW],['c',1252,1252,LOW,LOW],['r',1180,1237,LOW,LOW],['r',817,1079,1140,1170],['r',1088,1155,1222,LOW],
  ['c',1125,1192,1257,1257],['r',1192,1192,1266,1266],['r',1118,1132,1245,1245],['r',925,1043,1150,1205],['r',948,1012,1132,1132],
  ['c',965,979,1004,1105],['r',1012,1023,1037,1100],['c',985,1027,1067,1070],['r',1020,1035,1063,1110],['r',737,811,1045,1065],
  ['r',833,880,933,953],['c',843,880,932,1018],['r',817,870,955,985],['c',925,953,1075,1080],['c',1040,1112,1193,LOW],
  ['r',702,702,1216,1234],['r',392,590,775,795],['r',402,433,689,752],['c',236,419,548,682],['r',445,466,662,756],
  ['r',162,509,560,595],['r',360,447,632,680],['r',410,507,524,568],['c',472,472,633,668],['r',520,549,636,750],
  ['r',465,487,620,650],['r',197,334,440,528],['r',82,142,390,480],['c',137,224,262,320],['c',297,297,612,630],
  ['c',588,681,703,770],['r',648,669,676,710],['c',638,668,720,740],['r',179,179,649,683],['c',62,125,278,340],
  ['r',125,195,347,370],['c',173,188,256,272],['c',224,257,372,400]
];

var lines = {
  ma250: { a: [[13,1248],[100,1222],[200,1190],[300,1162],[400,1138],[500,1105],[600,1075],[700,1045],[800,1022],[900,1015],[1000,1007],[1100,992],[1200,980],[1300,967],[1400,955],[1540,941]],
           b: [[0,967],[100,955],[200,935],[300,920],[400,905],[500,890],[600,875],[700,860],[800,850],[900,830],[1000,822],[1100,805],[1200,800],[1339,788]] },
  ma120: { a: [[13,546],[72,518],[130,498],[200,470],[280,440],[350,412],[380,400],[440,370],[510,333],[570,307],[650,270],[720,245],[780,230],[845,216],[930,215],[985,214],[1030,232],[1090,270],[1170,340],[1260,405],[1310,437],[1400,480],[1470,520],[1560,568]],
           b: [[0,612],[30,635],[80,650],[150,680],[220,700],[300,737],[400,780],[480,808],[540,827],[600,845],[680,855],[750,867],[800,867],[880,855],[1000,840],[1090,820],[1135,814],[1200,827],[1250,835],[1339,838]] },
  ma60: { a: [[13,425],[65,437],[130,465],[180,490],[215,520],[260,545],[310,565],[363,597],[420,607],[450,613],[490,610],[540,606],[590,610],[640,614],[690,612],[740,603],[800,595],[860,597],[930,597],[960,590],[1105,590],[1130,597],[1170,623],[1240,660],[1290,705],[1360,748],[1420,770],[1490,797],[1560,825]],
          b: [[0,860],[30,875],[120,885],[180,900],[250,925],[340,943],[470,975],[520,1000],[640,1045],[700,1063],[754,1078],[805,1086],[860,1080],[950,1050],[1010,1043],[1060,1025],[1110,998],[1160,990],[1210,973],[1250,945],[1339,890]] },
  ma20: { a: [[13,525],[42,545],[72,578],[101,610],[130,665],[160,700],[189,740],[219,755],[248,765],[277,773],[305,768],[333,765],[363,770],[392,760],[421,735],[451,715],[480,675],[510,635],[539,612],[568,597],[598,583],[627,578],[657,575],[686,572],[713,550],[742,530],[771,515],[801,505],[860,505],[889,520],[948,530],[977,555],[1007,590],[1036,620],[1065,655],[1095,695],[1122,725],[1151,755],[1180,785],[1210,820],[1239,850],[1268,885],[1298,930],[1327,965],[1356,1000],[1386,1025],[1415,1045],[1444,1075],[1473,1105],[1503,1130],[1530,1150],[1560,1170]],
          b: [[0,1185],[30,1215],[69,1230],[120,1245],[146,1255],[222,1257],[248,1252],[273,1255],[322,1252],[373,1240],[425,1222],[476,1190],[527,1165],[603,1145],[653,1115],[703,1082],[754,1080],[780,1050],[831,965],[882,905],[933,825],[959,805],[1008,760],[1058,700],[1110,620],[1161,605],[1212,580],[1238,545],[1263,490],[1288,460],[1314,445],[1339,443]] },
  ma10: { a: [[13,760],[42,753],[72,760],[101,773],[130,778],[160,788],[189,788],[219,778],[248,780],[277,795],[305,772],[333,777],[363,780],[392,745],[421,695],[451,640],[480,560],[510,490],[539,440],[568,405],[598,393],[627,385],[657,370],[686,400],[713,410],[742,420],[771,475],[801,520],[830,565],[860,615],[889,640],[918,670],[948,700],[977,718],[1007,775],[1036,808],[1065,835],[1095,870],[1122,880],[1151,888],[1180,920],[1210,950],[1239,990],[1268,1035],[1298,1075],[1327,1115],[1356,1147],[1386,1163],[1415,1195],[1444,1230],[1465,1253],[1500,1300]],
          b: [[50,1310],[90,1285],[120,1268],[171,1240],[222,1190],[273,1198],[322,1208],[348,1200],[399,1200],[450,1195],[476,1190],[501,1165],[527,1140],[552,1105],[578,1093],[603,1090],[629,1058],[653,1015],[678,985],[703,970],[729,975],[754,990],[780,955],[805,910],[831,850],[857,800],[882,770],[908,730],[933,680],[985,600],[1008,540],[1033,510],[1058,480],[1084,455],[1110,432],[1135,450],[1161,470],[1186,492],[1212,513],[1238,462],[1263,430],[1288,408],[1314,403],[1339,425]] },
  ma5: { a: [[13,862],[42,770],[72,725],[101,692],[130,703],[160,708],[189,775],[219,840],[248,880],[277,888],[305,830],[333,770],[363,735],[392,615],[421,490],[451,428],[480,350],[510,258],[525,258],[568,300],[598,350],[627,420],[657,480],[686,532],[713,520],[742,496],[771,520],[801,545],[830,590],[860,700],[889,780],[918,805],[948,848],[977,848],[1007,840],[1036,840],[1065,855],[1095,895],[1122,920],[1151,942],[1180,1000],[1210,1050],[1239,1085],[1268,1150],[1298,1185],[1327,1210],[1356,1245],[1386,1248],[1415,1262],[1500,1320]],
         b: [[20,1300],[45,1265],[69,1225],[120,1197],[171,1185],[222,1175],[248,1190],[298,1210],[322,1228],[348,1228],[373,1218],[399,1205],[425,1180],[450,1160],[476,1152],[501,1110],[527,1065],[552,1040],[578,1030],[603,1030],[629,985],[653,960],[678,945],[703,906],[729,912],[754,985],[780,950],[805,880],[831,790],[857,680],[882,550],[908,510],[933,478],[985,515],[1008,528],[1033,525],[1058,490],[1084,420],[1110,357],[1135,370],[1161,415],[1186,490],[1212,595],[1238,578],[1263,510],[1288,410],[1314,330],[1339,257]] }
};

function el(name, attrs, parent) {
  var e = document.createElementNS(NS, name);
  for (var k in attrs) e.setAttribute(k, attrs[k]);
  parent.appendChild(e);
  return e;
}

var g = document.getElementById('up-series');
function drawCandle(c, i, conv) {
  if (!c) return;
  var x = Math.round(6.6 + 14.9 * i);
  var kind = c[0], hi = conv(c[1]), top = conv(c[2]), bot = conv(c[3]), lo = conv(c[4]);
  var base = kind.charAt(0);
  var wick = 'wick wick-' + base;
  if (kind === 'r') {
    if (top - hi > 0.5) el('line', { x1: x, x2: x, y1: hi, y2: top, 'class': wick }, g);
    if (lo - bot > 0.5) el('line', { x1: x, x2: x, y1: bot, y2: lo, 'class': wick }, g);
    el('rect', { x: x - 5, y: top, width: 10, height: Math.max(bot - top, 1), 'class': 'body-r' }, g);
  } else {
    el('line', { x1: x, x2: x, y1: hi, y2: lo, 'class': wick }, g);
    var cls = kind === 'c' ? 'body-c' : (kind === 'rf' ? 'body-rf' : 'body-w');
    el('rect', { x: x - 5.5, y: top, width: 11, height: Math.max(bot - top, 2), 'class': cls }, g);
  }
}
candlesA.forEach(function (c, i) { drawCandle(c, i, yA); });
candlesB.forEach(function (c, i) { drawCandle(c, i + 54, yB); });

Object.keys(lines).forEach(function (name) {
  var pts = lines[name].a.map(A).concat(lines[name].b.map(B));
  var s = pts.map(function (p) { return p[0].toFixed(1) + ',' + p[1].toFixed(1); }).join(' ');
  el('polyline', { points: s, 'class': 'ln ' + name }, g);
});

// Indicator spike: a pixel-stepped triangle over a flat base line.
(function () {
  var cx = 662.3, base = 1273;
  var steps = [[1250,14.5],[1202,14],[1154,13],[1106,11.9],[1058,10.3],[1010,8.7],[962,7.1],[914,5.5],[866,3.9],[818,2.3],[793,.8]];
  var d = 'M3 ' + base + 'H' + (cx - 14.5);
  steps.forEach(function (s, i) {
    d += 'V' + s[0];
    var next = steps[i + 1];
    if (next) d += 'H' + (cx - next[1]);
  });
  d += 'H' + (cx + 0.8);
  steps.slice().reverse().forEach(function (s, i, arr) {
    var next = arr[i + 1];
    d += 'V' + (next ? next[0] : base);
    if (next) d += 'H' + (cx + next[1]);
  });
  d += 'H1586';
  document.getElementById('spike').setAttribute('d', d);
})();
```
